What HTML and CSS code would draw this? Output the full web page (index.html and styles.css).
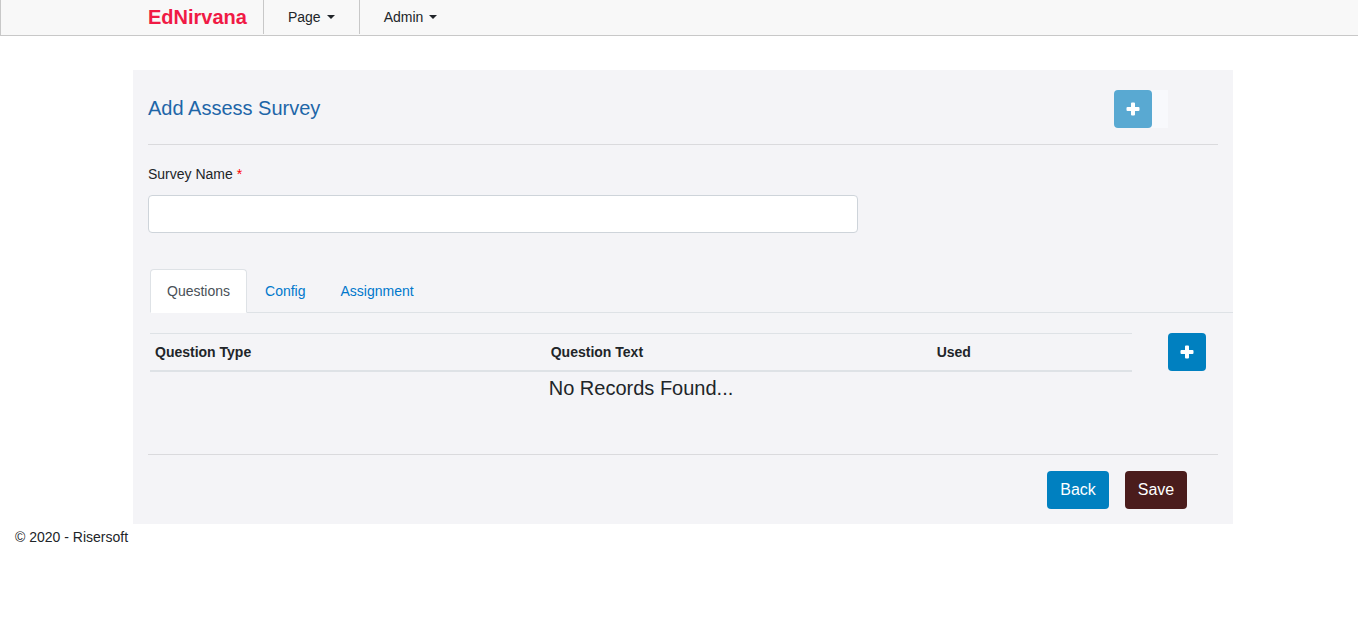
FILE: index.html
```html
<!DOCTYPE html>
<html lang="en">
<head>
<meta charset="utf-8">
<meta name="viewport" content="width=device-width, initial-scale=1">
<title>Add Assess Survey - EdNirvana</title>
<link rel="stylesheet" href="styles.css">
</head>
<body>
<header class="navbar">
  <nav class="navbar-inner">
    <a class="brand" href="#">EdNirvana</a>
    <button class="nav-item" type="button">Page<span class="caret"></span></button>
    <button class="nav-item" type="button">Admin<span class="caret"></span></button>
  </nav>
</header>
<main class="page">
  <form class="panel">
    <div class="panel-head">
      <h1 class="title">Add Assess Survey</h1>
      <div class="head-action">
        <button class="btn btn-icon" type="button" aria-label="Add survey" disabled>
          <svg class="plus" viewBox="0 0 14 14" aria-hidden="true"><path d="M6 0.500h2q1 0 1 1V5h3.500q1 0 1 1v2q0 1-1 1H9v3.500q0 1-1 1H6q-1 0-1-1V9H1.500q-1 0-1-1V6q0-1 1-1H5V1.500q0-1 1-1z"/></svg>
        </button>
      </div>
    </div>
    <div class="field">
      <label class="label" for="survey-name">Survey Name <span class="required">*</span></label>
      <input class="input" id="survey-name" type="text" required>
    </div>
    <div class="tabs">
      <a class="tab tab-active" href="#questions">Questions</a>
      <a class="tab" href="#config">Config</a>
      <a class="tab" href="#assignment">Assignment</a>
    </div>
    <section class="questions" id="questions">
      <div class="records">
        <table class="table">
          <thead>
            <tr><th class="col-type">Question Type</th><th class="col-text">Question Text</th><th>Used</th></tr>
          </thead>
        </table>
        <p class="empty">No Records Found...</p>
      </div>
      <button class="btn btn-icon" type="button" aria-label="Add question">
        <svg class="plus" viewBox="0 0 14 14" aria-hidden="true"><path d="M6 0.500h2q1 0 1 1V5h3.500q1 0 1 1v2q0 1-1 1H9v3.500q0 1-1 1H6q-1 0-1-1V9H1.500q-1 0-1-1V6q0-1 1-1H5V1.500q0-1 1-1z"/></svg>
      </button>
    </section>
    <div class="actions">
      <button class="btn" type="button">Back</button>
      <button class="btn btn-save" type="submit">Save</button>
    </div>
  </form>
</main>
<footer class="footer">© 2020 - Risersoft</footer>
</body>
</html>
```
FILE: styles.css
```css
* { box-sizing: border-box; }
body {
  margin: 0;
  background: #fff;
  color: #212529;
  font: 14px/20px "Liberation Sans", Arial, sans-serif;
}
.navbar {
  padding: 0 0 1px 7px;
  border-left: 1px solid #c8c8c8;
  border-bottom: 1px solid #c8c8c8;
  background: #f8f8f8;
}
.navbar-inner {
  display: flex;
  max-width: 1100px;
  margin: 0 auto;
  padding-left: 15px;
}
.brand {
  padding: 2px 16px 2px 0;
  color: #f01a45;
  font-size: 20px;
  font-weight: bold;
  line-height: 30px;
  text-decoration: none;
}
.nav-item {
  display: flex;
  align-items: center;
  gap: 6px;
  padding: 0 24px;
  border: 0;
  border-left: 1px solid #c8c8c8;
  background: transparent;
  color: inherit;
  font: inherit;
}
.caret {
  border: 4px solid transparent;
  border-top-color: currentColor;
  border-bottom: 0;
}
.page { padding: 34px 0 0 8px; }
.panel {
  max-width: 1100px;
  margin: 0 auto;
  padding: 20px 15px 15px;
  background: #f4f4f7;
}
.panel-head {
  display: flex;
  justify-content: space-between;
  padding-bottom: 16px;
  border-bottom: 1px solid #dadadd;
}
.title {
  margin: 0;
  color: #1e66a8;
  font-size: 20px;
  font-weight: normal;
  line-height: 36px;
}
.head-action {
  margin-right: 50px;
  padding-right: 16px;
  background: #f8f9fc;
}
.btn {
  height: 38px;
  min-width: 62px;
  padding: 0 12px;
  border: 0;
  border-radius: 4px;
  background: #0080c0;
  color: #fff;
  font: inherit;
  font-size: 16px;
}
.btn:disabled { background: #59a9d2; }
.btn-icon {
  display: flex;
  flex: none;
  align-items: center;
  justify-content: center;
  min-width: 38px;
}
.plus { width: 14px; height: 14px; fill: #fff; }
.field { padding: 19px 0 36px; }
.label { display: block; margin-bottom: 11px; }
.required { color: #f00; }
.input {
  display: block;
  width: 100%;
  max-width: 710px;
  height: 38px;
  padding: 0 12px;
  border: 1px solid #ced4da;
  border-radius: 4px;
  background: #fff;
  font: inherit;
}
.tabs {
  display: flex;
  gap: 1px;
  margin: 0 -15px 0 2px;
  border-bottom: 1px solid #dee2e6;
}
.tab {
  margin-bottom: -1px;
  padding: 11px 16px;
  border: 1px solid transparent;
  border-radius: 4px 4px 0 0;
  color: #0078cc;
  text-decoration: none;
}
.tab-active {
  border-color: #dee2e6 #dee2e6 #fff;
  background: #fff;
  color: #495057;
}
.questions {
  display: flex;
  align-items: flex-start;
  gap: 36px;
  padding: 20px 12px 54px 2px;
}
.records { flex: 1; }
.table {
  width: 100%;
  border-collapse: separate;
  border-spacing: 0;
  table-layout: fixed;
}
.table th {
  padding: 8px 5px;
  border-top: 1px solid #dee2e6;
  border-bottom: 2px solid #dee2e6;
  text-align: left;
}
.table .col-type { width: 40.3%; }
.table .col-text { width: 39.3%; }
.empty {
  margin: 4px 0 0;
  font-size: 20px;
  line-height: 24px;
  text-align: center;
}
.actions {
  display: flex;
  justify-content: flex-end;
  gap: 16px;
  padding: 16px 31px 0 0;
  border-top: 1px solid #dadadd;
}
.btn-save { background: #4a1c1c; }
.footer { padding: 3px 15px; }
```
